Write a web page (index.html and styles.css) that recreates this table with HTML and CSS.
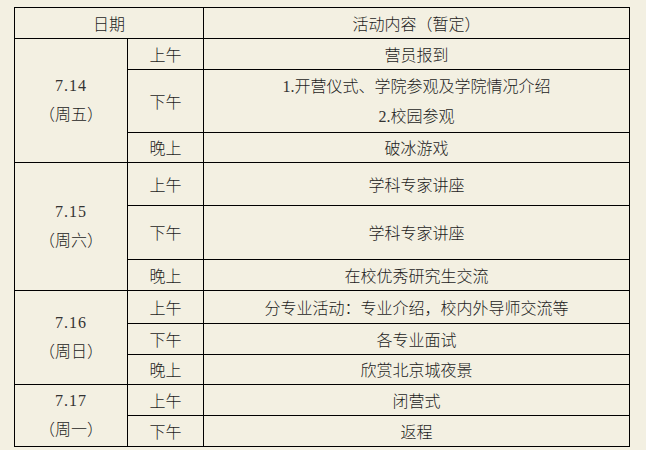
FILE: index.html
```html
<!DOCTYPE html>
<html lang="zh">
<head>
<meta charset="utf-8">
<title>日程安排</title>
<link rel="stylesheet" href="styles.css">
</head>
<body>
<table class="schedule">
  <colgroup>
    <col class="c-date">
    <col class="c-slot">
    <col class="c-act">
  </colgroup>
  <tr class="h31">
    <td colspan="2">日期</td>
    <td>活动内容（暂定）</td>
  </tr>
  <tr class="h31">
    <td rowspan="3" class="date"><span class="num">7.14</span><br>（周五）</td>
    <td>上午</td>
    <td>营员报到</td>
  </tr>
  <tr class="h62">
    <td>下午</td>
    <td class="multi"><span class="num">1.</span>开营仪式、学院参观及学院情况介绍<br><span class="num">2.</span>校园参观</td>
  </tr>
  <tr class="h30">
    <td>晚上</td>
    <td>破冰游戏</td>
  </tr>
  <tr class="h43">
    <td rowspan="3" class="date"><span class="num">7.15</span><br>（周六）</td>
    <td>上午</td>
    <td>学科专家讲座</td>
  </tr>
  <tr class="h54">
    <td>下午</td>
    <td>学科专家讲座</td>
  </tr>
  <tr class="h31">
    <td>晚上</td>
    <td>在校优秀研究生交流</td>
  </tr>
  <tr class="h33">
    <td rowspan="3" class="date"><span class="num">7.16</span><br>（周日）</td>
    <td>上午</td>
    <td>分专业活动：专业介绍，校内外导师交流等</td>
  </tr>
  <tr class="h31">
    <td>下午</td>
    <td>各专业面试</td>
  </tr>
  <tr class="h30">
    <td>晚上</td>
    <td>欣赏北京城夜景</td>
  </tr>
  <tr class="h31">
    <td rowspan="2" class="date"><span class="num">7.17</span><br>（周一）</td>
    <td>上午</td>
    <td>闭营式</td>
  </tr>
  <tr class="h31">
    <td>下午</td>
    <td>返程</td>
  </tr>
</table>
</body>
</html>
```
FILE: styles.css
```css
html, body {
  margin: 0;
  padding: 0;
  background: #f3f0e2;
}
body {
  padding: 7px 0 0 14px;
  font-family: "Noto Sans CJK SC", sans-serif;
  font-size: 16px;
  font-weight: 300;
  color: #1c1c1c;
}
.schedule {
  border-collapse: collapse;
  table-layout: fixed;
  width: 615px;
}
.c-date { width: 113px; }
.c-slot { width: 76px; }
.c-act { width: 426px; }
.schedule td {
  border: 1px solid #000;
  padding: 0 0 1px;
  text-align: center;
  vertical-align: middle;
  line-height: 20px;
}
.schedule td.date {
  line-height: 29px;
  padding-bottom: 3px;
}
.schedule td.multi {
  line-height: 30px;
  padding-bottom: 2px;
}
.num {
  font-family: "Liberation Serif", serif;
  font-weight: 400;
  line-height: 1;
  color: #333;
}
.date .num {
  letter-spacing: 1px;
}
.h30 { height: 30px; }
.h31 { height: 31px; }
.h33 { height: 33px; }
.h43 { height: 43px; }
.h54 { height: 54px; }
.h62 { height: 62px; }
```
